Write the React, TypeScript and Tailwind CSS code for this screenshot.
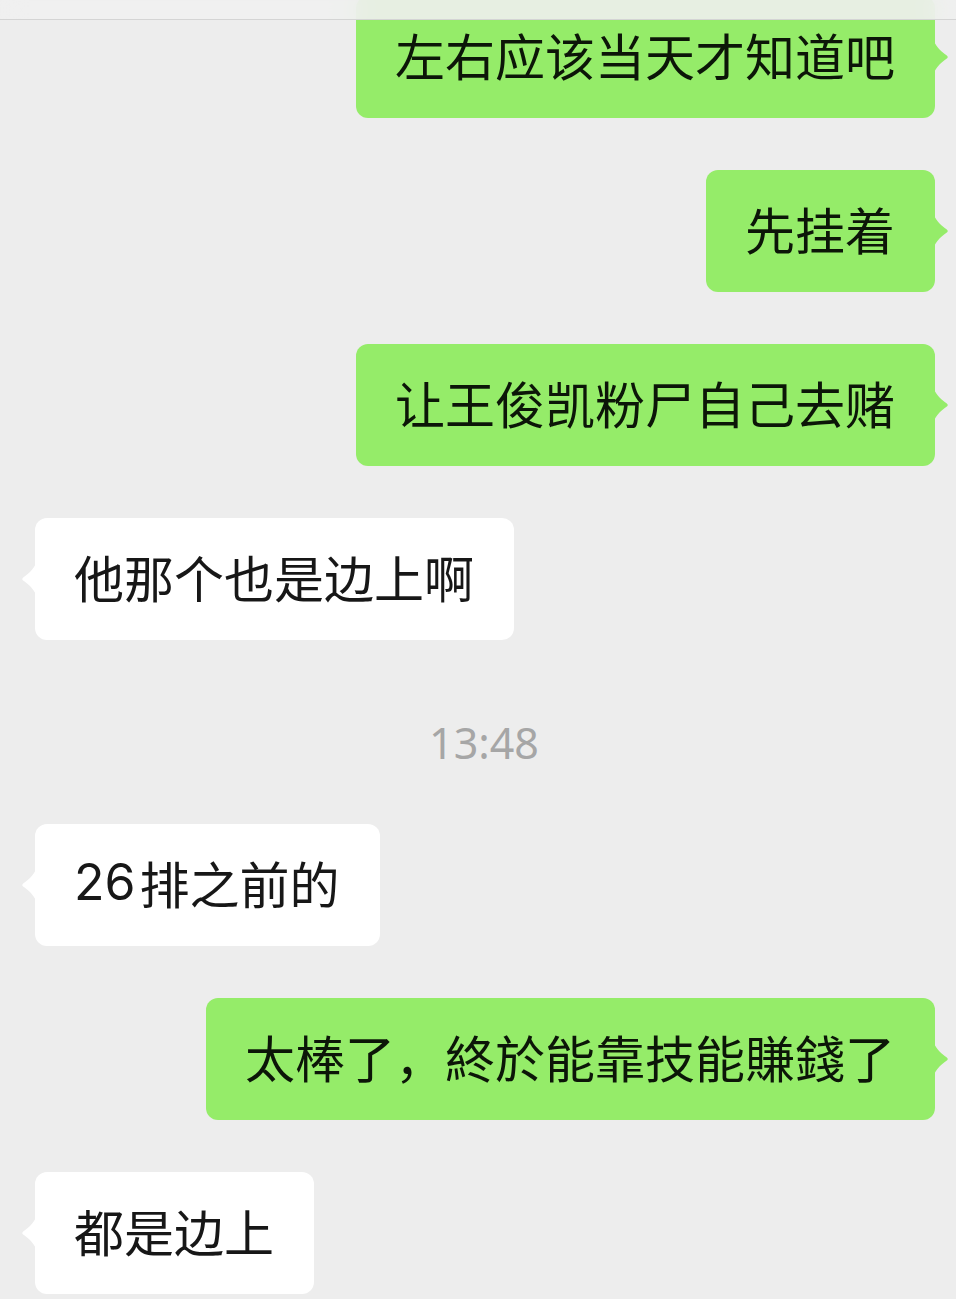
import React from "react";

type Msg =
  | { kind: "me" | "them"; text: React.ReactNode }
  | { kind: "time"; text: string };

const messages: Msg[] = [
  { kind: "me", text: "左右应该当天才知道吧" },
  { kind: "me", text: "先挂着" },
  { kind: "me", text: "让王俊凯粉尸自己去赌" },
  { kind: "them", text: "他那个也是边上啊" },
  { kind: "time", text: "13:48" },
  {
    kind: "them",
    text: (
      <>
        <span className="font-['Inter',sans-serif] mr-[4px]">26</span>排之前的
      </>
    ),
  },
  { kind: "me", text: "太棒了，終於能靠技能賺錢了" },
  { kind: "them", text: "都是边上" },
];

function Tail({ side }: { side: "left" | "right" }) {
  if (side === "right") {
    return (
      <svg
        className="absolute right-[-14px] top-1/2 -translate-y-1/2"
        width="15"
        height="32"
        viewBox="0 0 15 32"
      >
        <path d="M0 0 C2 6 8 11 12.5 14.2 Q15 16 12.5 17.8 C8 21 2 26 0 32 Z" fill="#95ec69" />
      </svg>
    );
  }
  return (
    <svg
      className="absolute left-[-14px] top-1/2 -translate-y-1/2"
      width="15"
      height="32"
      viewBox="0 0 15 32"
    >
      <path d="M15 0 C13 6 7 11 2.5 14.2 Q0 16 2.5 17.8 C7 21 13 26 15 32 Z" fill="#ffffff" />
    </svg>
  );
}

function Bubble({ side, children }: { side: "left" | "right"; children: React.ReactNode }) {
  const mine = side === "right";
  return (
    <div className={mine ? "flex justify-end pr-[21px]" : "flex justify-start pl-[35px]"}>
      <div
        className={
          "relative flex h-[122px] items-center rounded-[12px] pl-[39px] pr-[40px] pb-[6px] text-[50px] leading-none whitespace-nowrap " +
          (mine ? "bg-[#95ec69] text-[#0c1608]" : "bg-white text-[#171717]")
        }
      >
        {children}
        <Tail side={side} />
      </div>
    </div>
  );
}

export default function App() {
  return (
    <div className="relative h-[1299px] w-full overflow-hidden bg-[#ededed] font-['Noto_Sans_CJK_SC','Noto_Sans',sans-serif]">
      <div className="-mt-[4px] flex flex-col gap-[52px]">
        {messages.map((m, i) =>
          m.kind === "time" ? (
            <div
              key={i}
              className="h-[80px] pt-[30px] pl-[12px] text-center font-['Noto_Sans',sans-serif] text-[43px] leading-[42px] text-[#a6a6a6]"
            >
              {m.text}
            </div>
          ) : (
            <Bubble key={i} side={m.kind === "me" ? "right" : "left"}>
              {m.text}
            </Bubble>
          )
        )}
      </div>

      {/* frosted top bar */}
      <div className="absolute inset-x-0 top-0 h-[20px] border-b border-[#d4d4d4] bg-[#efefef]/90 backdrop-blur-md" />
    </div>
  );
}
